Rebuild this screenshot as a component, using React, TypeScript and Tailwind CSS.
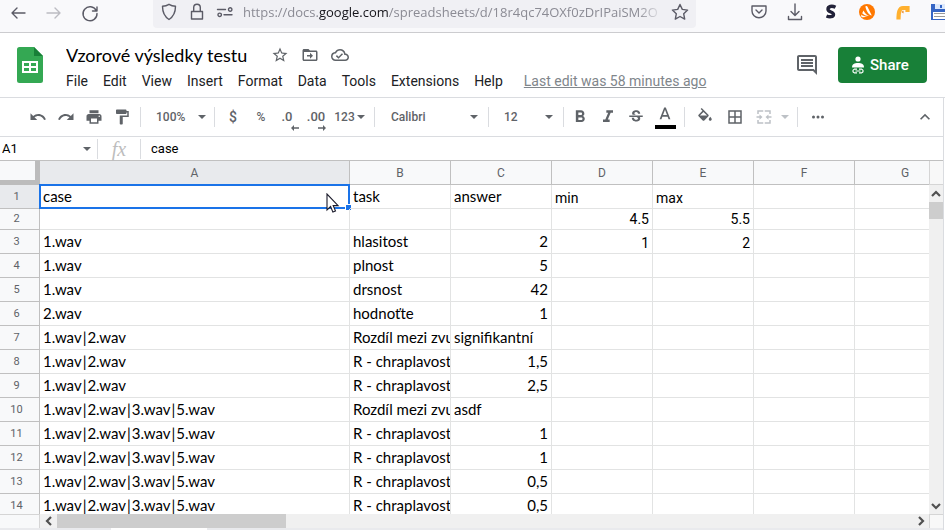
import React from "react";

type Cell = string | undefined;

const HEADERS = ["A", "B", "C", "D", "E", "F", "G"];

const ROWS: Cell[][] = [
  ["case", "task", "answer", "min", "max"],
  ["", "", "", "4.5", "5.5"],
  ["1.wav", "hlasitost", "2", "1", "2"],
  ["1.wav", "plnost", "5"],
  ["1.wav", "drsnost", "42"],
  ["2.wav", "hodnoťte", "1"],
  ["1.wav|2.wav", "Rozdíl mezi zvu", "signifikantní"],
  ["1.wav|2.wav", "R - chraplavost", "1,5"],
  ["1.wav|2.wav", "R - chraplavost", "2,5"],
  ["1.wav|2.wav|3.wav|5.wav", "Rozdíl mezi zvu", "asdf"],
  ["1.wav|2.wav|3.wav|5.wav", "R - chraplavost", "1"],
  ["1.wav|2.wav|3.wav|5.wav", "R - chraplavost", "1"],
  ["1.wav|2.wav|3.wav|5.wav", "R - chraplavost", "0,5"],
  ["1.wav|2.wav|3.wav|5.wav", "R - chraplavost", "0,5"],
];

const isNumber = (v: string) => /^[\d.,]+$/.test(v);

function Icon({ d, className = "size-[18px]", box = "0 0 24 24" }: { d: string; className?: string; box?: string }) {
  return (
    <svg viewBox={box} className={`shrink-0 ${className}`} fill="currentColor" aria-hidden="true">
      <path d={d} />
    </svg>
  );
}

function Line({ d, className = "size-5" }: { d: string; className?: string }) {
  return (
    <svg
      viewBox="0 0 20 20"
      className={`shrink-0 ${className}`}
      fill="none"
      stroke="currentColor"
      strokeWidth="1.4"
      strokeLinecap="round"
      strokeLinejoin="round"
      aria-hidden="true"
    >
      <path d={d} />
    </svg>
  );
}

function Caret() {
  return (
    <svg viewBox="0 0 8 4" className="h-1 w-2 shrink-0" fill="currentColor" aria-hidden="true">
      <path d="M0 0h8L4 4z" />
    </svg>
  );
}

function Tool({ label, className, children }: { label: string; className: string; children: React.ReactNode }) {
  return (
    <button type="button" aria-label={label} className={`flex h-6 shrink-0 items-center justify-center ${className}`}>
      {children}
    </button>
  );
}

function Picker({ label, className, options }: { label: string; className: string; options: string[] }) {
  return (
    <label className={`flex h-6 shrink-0 items-center ${className}`}>
      <select aria-label={label} className="h-6 min-w-0 flex-1 appearance-none bg-transparent outline-none">
        {options.map((o) => (
          <option key={o}>{o}</option>
        ))}
      </select>
      <Caret />
    </label>
  );
}

function Divider({ className = "" }: { className?: string }) {
  return <div className={`h-5 w-px shrink-0 bg-[#dadce0] ${className}`} />;
}

function BrowserBar() {
  return (
    <header className="flex h-[33px] shrink-0 items-start overflow-hidden border-b border-[#cccccf] bg-[#f9f9fb] text-[#5b5b66]">
      <div className="flex h-[26px] items-center">
        <button type="button" aria-label="Back" className="ml-2 flex w-5 justify-center">
          <Line d="M17 10H4M9 5l-5 5 5 5" />
        </button>
        <button type="button" aria-label="Forward" className="ml-4 flex w-5 justify-center text-[#bcbcc2]">
          <Line d="M3 10h13M11 5l5 5-5 5" />
        </button>
        <button type="button" aria-label="Reload" className="ml-4 flex w-5 justify-center">
          <Line d="M16.2 7.500A7 7 0 1 0 17 10.500M17 4v4h-4.500" />
        </button>
      </div>
      <div className="ml-[53px] flex h-7 w-[543px] items-center rounded-b bg-[#f0f0f4] pb-1">
        <Line className="ml-1.5 size-5" d="M10 2.300c2 1.200 4 1.800 6.500 2 0 6-1.500 10-6.500 13.200C5 14.300 3.500 10.300 3.500 4.300 6 4.100 8 3.500 10 2.300z" />
        <Line className="ml-2 size-5" d="M4.500 9.500h11v7.500h-11zM6.700 9V5.500a3.300 3.300 0 0 1 6.600 0V9" />
        <Line className="ml-2 size-5" d="M2.500 7.500h8M13.500 7.500a1.700 1.700 0 1 0 3.400 0a1.700 1.700 0 1 0-3.400 0M3 12.800a1.700 1.700 0 1 0 3.400 0a1.700 1.700 0 1 0-3.400 0M9 12.800h8" />
        <p className="ml-2 w-[420px] overflow-hidden font-['Open_Sans','Noto_Sans',sans-serif] text-[13px] leading-6 whitespace-nowrap text-[#8b8b94] [mask-image:linear-gradient(to_right,#000_94%,transparent)]">
          https://docs.<span className="text-[#15141a]">google.com</span>/spreadsheets/d/18r4qc74OXf0zDrIPaiSM2O
        </p>
        <button type="button" aria-label="Bookmark this page" className="ml-[7px] flex">
          <Line d="M10 2.500l2.300 4.900 5.300.7-3.900 3.700 1 5.300-4.700-2.600-4.700 2.600 1-5.300L2.400 8.100l5.300-.7z" />
        </button>
      </div>
      <div className="ml-auto flex h-6 shrink-0 items-center">
        <button type="button" aria-label="Save to Pocket" className="mr-4 flex">
          <Line d="M3 4h14v5a7 6.800 0 0 1-14 0zM7 8l3 3 3-3" />
        </button>
        <button type="button" aria-label="Downloads" className="mr-4 flex">
          <Line d="M10 2v11M6 9.500l4 4 4-4M3.500 14.500v3h13v-3" />
        </button>
        <button type="button" aria-label="Stylus" className="mr-4 flex">
          <svg viewBox="0 0 20 20" className="size-5" aria-hidden="true">
            <circle cx="10" cy="10" r="8" fill="#fff" />
            <path d="M14.500 5.300C10.500 3.300 7 4.500 7 7.300c0 3 5.500 2.500 5.500 5.200 0 2.500-4 2.800-7 1.500" fill="none" stroke="#23233a" strokeWidth="3.400" />
          </svg>
        </button>
        <button type="button" aria-label="Avast" className="mr-4 flex">
          <svg viewBox="0 0 20 20" className="size-5" aria-hidden="true">
            <circle cx="10" cy="10" r="8" fill="#ff7800" />
            <path d="M8.300 4.500c.8-1 2-.5 2.300.4l4.200 8.600c-2.700-.3-5-3.500-6.500-9zM6.500 8.500c1.200 2.500 3 4.500 5.500 5.500-3-.2-5.500-1-6.800-2.700zM4 12.500c2 1.500 4 2 6.500 2-2.500 1-5 1-6 .4z" fill="#fff" />
          </svg>
        </button>
        <button type="button" aria-label="Extension" className="mr-[18px] flex">
          <svg viewBox="0 0 20 20" className="size-5" aria-hidden="true">
            <path d="M5.500 17.500C5.500 10 6.500 6 10 6h4.500v4" fill="none" stroke="#ffb02e" strokeWidth="4.200" />
            <path d="M8.500 10l2-1.500v3z" fill="#e8821e" />
          </svg>
        </button>
        <button type="button" aria-label="Save page" className="flex">
          <svg viewBox="0 0 14 18" className="h-[18px] w-3.5" aria-hidden="true">
            <path d="M0 1h14v16H0z" fill="#3565c4" />
            <path d="M4 1h10v5H4z" fill="#dce8fb" />
            <path d="M9 2h2v3H9z" fill="#3565c4" />
            <path d="M2 9h12v7H2z" fill="#fff" />
            <path d="M3 10.500h11M3 13.500h11" stroke="#999" />
          </svg>
        </button>
      </div>
    </header>
  );
}

function DocHeader() {
  const menus = ["File", "Edit", "View", "Insert", "Format", "Data", "Tools", "Extensions", "Help"];
  return (
    <div className="flex h-[65px] shrink-0 items-start border-b border-[#dadce0]">
      <a href="#home" aria-label="Sheets home" className="mt-3.5 ml-[17px] flex">
        <svg viewBox="0 0 26 36" className="h-9 w-[26px]" aria-hidden="true">
          <path d="M2.500 0H17l9 9v24.500a2.500 2.500 0 0 1-2.500 2.500h-21A2.500 2.500 0 0 1 0 33.500v-31A2.500 2.500 0 0 1 2.500 0z" fill="#34a853" />
          <path d="M17 0l9 9h-9z" fill="#188038" />
          <path d="M5 14h16v12H5zM7 16v3h5v-3zM14 16v3h5v-3zM7 21v3h5v-3zM14 21v3h5v-3z" fill="#fff" fillRule="evenodd" />
        </svg>
      </a>
      <div className="ml-[23px]">
        <div className="mt-2 flex h-7 items-center text-[#5f6368]">
          <input
            aria-label="Document title"
            defaultValue="Vzorové výsledky testu"
            className="h-7 w-[190px] font-['Lato',sans-serif] text-[18px] leading-7 text-black outline-none"
          />
          <button type="button" aria-label="Star" className="ml-[15px] flex">
            <Icon d="M22 9.240l-7.190-.620L12 2 9.190 8.630 2 9.240l5.460 4.730L5.820 21 12 17.270 18.180 21l-1.630-7.030L22 9.240zM12 15.400l-3.760 2.270 1-4.280-3.320-2.880 4.380-.380L12 6.100l1.710 4.040 4.380.380-3.320 2.880 1 4.280L12 15.400z" />
          </button>
          <button type="button" aria-label="Move" className="ml-3 flex">
            <Icon d="M20 6h-8l-2-2H4c-1.100 0-2 .9-2 2v12c0 1.100.9 2 2 2h16c1.100 0 2-.9 2-2V8c0-1.100-.9-2-2-2zm0 12H4V8h16v10zm-8-1l4-4-4-4v3H8v2h4z" />
          </button>
          <button type="button" aria-label="Document status" className="ml-3 flex">
            <Icon d="M19.350 10.040A7.490 7.490 0 0 0 12 4C9.110 4 6.600 5.640 5.350 8.040A5.994 5.994 0 0 0 0 14c0 3.310 2.690 6 6 6h13c2.760 0 5-2.240 5-5 0-2.640-2.050-4.780-4.650-4.960zM19 18H6c-2.210 0-4-1.790-4-4 0-2.050 1.530-3.760 3.560-3.970l1.070-.11.5-.95A5.469 5.469 0 0 1 12 6c2.620 0 4.880 1.860 5.390 4.430l.3 1.500 1.530.11A2.980 2.980 0 0 1 22 15c0 1.650-1.350 3-3 3zm-9-3.820l-2.090-2.090L6.500 13.500 10 17l6.010-6.010-1.410-1.410z" />
          </button>
        </div>
        <nav className="flex h-6 items-center font-['Roboto',sans-serif] text-[14px] leading-6 text-[#202124]">
          {menus.map((m) => (
            <button key={m} type="button" className="mr-[15px] whitespace-nowrap">
              {m}
            </button>
          ))}
          <a href="#history" className="ml-1.5 whitespace-nowrap text-[#80868b] underline">
            Last edit was 58 minutes ago
          </a>
        </nav>
      </div>
      <button type="button" aria-label="Comments" className="mt-5 ml-auto flex text-[#5f6368]">
        <Icon className="size-6" d="M21.990 4c0-1.100-.89-2-1.990-2H4c-1.100 0-2 .9-2 2v12c0 1.100.9 2 2 2h14l4 4-.01-18zM20 4v13.170L18.830 16H4V4h16zM6 12h12v2H6zm0-3h12v2H6zm0-3h12v2H6z" />
      </button>
      <button
        type="button"
        className="mt-3.5 mr-[18px] ml-[19px] flex h-9 w-[89px] shrink-0 items-center rounded bg-[#188038] pl-3 font-['Roboto',sans-serif] text-[15px] font-medium text-white"
      >
        <svg viewBox="0 0 16 18" className="mr-1 h-[18px] w-4" fill="none" aria-hidden="true">
          <circle cx="8" cy="3" r="2.600" fill="#fff" />
          <path d="M2 11.500C2 8 4.500 7 8 7s6 1 6 4.500z" fill="#fff" />
          <path d="M7 13.200H4.200a1.900 1.900 0 0 0 0 3.600H7M9 13.200h2.800a1.900 1.900 0 0 1 0 3.600H9M5.500 15h5" stroke="#fff" strokeWidth="1.200" />
        </svg>
        Share
      </button>
    </div>
  );
}

function Toolbar() {
  return (
    <div className="flex h-[39px] shrink-0 items-center border-b border-[#dadce0] font-['Roboto',sans-serif] text-[12px] font-medium text-[#5f6368]">
      <Tool label="Undo" className="ml-7 w-5">
        <Icon d="M12.500 8c-2.650 0-5.050.99-6.900 2.600L2 7v9h9l-3.620-3.620c1.390-1.160 3.160-1.880 5.120-1.880 3.540 0 6.550 2.310 7.600 5.500l2.370-.78C21.080 11.030 17.150 8 12.500 8z" />
      </Tool>
      <Tool label="Redo" className="ml-2 w-5">
        <Icon d="M18.400 10.600C16.550 8.990 14.150 8 11.500 8c-4.650 0-8.580 3.030-9.960 7.220L3.900 16c1.050-3.190 4.050-5.500 7.600-5.500 1.950 0 3.730.72 5.120 1.880L13 16h9V7l-3.600 3.600z" />
      </Tool>
      <Tool label="Print" className="ml-2 w-5">
        <Icon d="M19 8H5c-1.660 0-3 1.340-3 3v6h4v4h12v-4h4v-6c0-1.660-1.340-3-3-3zm-3 11H8v-5h8v5zm3-7c-.55 0-1-.45-1-1s.45-1 1-1 1 .45 1 1-.45 1-1 1zm-1-9H6v4h12V3z" />
      </Tool>
      <Tool label="Paint format" className="ml-2 w-5">
        <Icon d="M18 4V3c0-.55-.45-1-1-1H5c-.55 0-1 .45-1 1v4c0 .55.45 1 1 1h12c.55 0 1-.45 1-1V6h1v4H9v11c0 .55.45 1 1 1h2c.55 0 1-.45 1-1v-9h8V4h-3z" />
      </Tool>
      <Divider className="ml-2" />
      <Picker label="Zoom" className="ml-[15px] w-[50px]" options={["100%", "75%", "50%"]} />
      <Divider className="ml-2" />
      <Tool label="Format as currency" className="ml-2 w-5 text-[14px]">$</Tool>
      <Tool label="Format as percent" className="ml-2 w-5">%</Tool>
      <Tool label="Decrease decimal places" className="relative ml-1.5 w-5 text-[13px]">
        .0
        <svg viewBox="0 0 8 6" className="absolute -right-0.5 -bottom-0.5 h-1.5 w-2" fill="currentColor" aria-hidden="true">
          <path d="M0 3l3-3v2.300h5v1.400H3V6z" />
        </svg>
      </Tool>
      <Tool label="Increase decimal places" className="relative ml-[9px] w-5 text-[13px]">
        .00
        <svg viewBox="0 0 8 6" className="absolute right-0 -bottom-0.5 h-1.5 w-2" fill="currentColor" aria-hidden="true">
          <path d="M8 3L5 0v2.300H0v1.400h5V6z" />
        </svg>
      </Tool>
      <Tool label="More formats" className="ml-2 w-[31px] gap-0.5 text-[12px]">
        123
        <Caret />
      </Tool>
      <Divider className="ml-[9px]" />
      <Picker label="Font" className="ml-4 w-[87px]" options={["Calibri", "Arial", "Roboto"]} />
      <Divider className="ml-2.5" />
      <Picker label="Font size" className="ml-[15px] w-[49px]" options={["12", "11", "10"]} />
      <Divider className="ml-2.5" />
      <Tool label="Bold" className="ml-1.5 w-5">
        <Icon className="size-5" d="M15.600 10.790c.97-.67 1.650-1.770 1.650-2.790 0-2.260-1.750-4-4-4H7v14h7.040c2.090 0 3.710-1.700 3.710-3.790 0-1.520-.86-2.820-2.150-3.420zM10 6.500h3c.83 0 1.500.67 1.500 1.500s-.67 1.500-1.500 1.500h-3v-3zm3.500 9H10v-3h3.500c.83 0 1.500.67 1.500 1.500s-.67 1.500-1.500 1.500z" />
      </Tool>
      <Tool label="Italic" className="ml-2 w-5">
        <Icon className="size-5" d="M10 4v3h2.210l-3.420 8H6v3h8v-3h-2.210l3.420-8H18V4z" />
      </Tool>
      <Tool label="Strikethrough" className="ml-2 w-5">
        <Icon d="M7.240 8.750c-.26-.48-.39-1.030-.39-1.670 0-.61.13-1.160.4-1.670.26-.5.630-.93 1.110-1.290.48-.35 1.050-.63 1.700-.83.660-.19 1.390-.29 2.180-.29.810 0 1.540.11 2.210.34.660.22 1.230.54 1.690.94.470.4.830.88 1.080 1.430s.38 1.150.38 1.810h-3.010c0-.31-.05-.59-.15-.85-.09-.27-.24-.49-.44-.68-.2-.19-.45-.33-.75-.44-.3-.1-.66-.16-1.060-.16-.39 0-.74.04-1.030.13s-.53.21-.72.36c-.19.16-.34.340-.44.550-.1.210-.15.430-.15.660 0 .48.250.88.740 1.210.38.250.77.480 1.410.7H7.390c-.05-.08-.11-.17-.15-.25zM21 12v-2H3v2h9.620c.18.070.40.140.55.200.370.170.66.340.87.510s.35.360.43.570c.07.200.11.430.11.690 0 .23-.05.450-.14.660-.09.200-.23.380-.42.530-.19.150-.42.260-.71.350-.29.080-.63.130-1.010.13-.43 0-.83-.04-1.180-.13s-.66-.23-.91-.42c-.25-.19-.45-.44-.59-.75s-.25-.76-.25-1.210H6.400c0 .55.080 1.130.24 1.580s.37.850.65 1.210c.28.350.6.660.98.920.37.260.78.480 1.220.65.440.170.9.300 1.380.39.480.08.96.13 1.440.13.800 0 1.530-.09 2.180-.28s1.210-.45 1.670-.79c.46-.34.82-.77 1.070-1.270s.38-1.070.38-1.710c0-.6-.1-1.140-.31-1.610-.05-.11-.11-.23-.17-.33H21z" />
      </Tool>
      <Tool label="Text colour" className="ml-2 w-[22px] flex-col">
        <Icon className="size-5" d="M11 3L5.500 17h2.250l1.120-3h6.250l1.120 3h2.250L13 3h-2zm-1.380 9L12 5.670 14.380 12H9.620z" />
        <span className="h-1 w-[21px] shrink-0 bg-black" />
      </Tool>
      <Divider className="ml-2" />
      <Tool label="Fill colour" className="ml-2.5 w-5">
        <Icon d="M16.560 8.940L7.620 0 6.210 1.410l2.380 2.380-5.150 5.150a1.490 1.490 0 0 0 0 2.120l5.500 5.500c.29.290.68.440 1.060.44s.77-.15 1.060-.44l5.500-5.500c.59-.58.59-1.530 0-2.120zM5.210 10L10 5.210 14.790 10zM19 11.500s-2 2.170-2 3.500c0 1.100.9 2 2 2s2-.9 2-2c0-1.330-2-3.500-2-3.500z" />
      </Tool>
      <Tool label="Borders" className="ml-2.5 w-5">
        <Icon d="M3 3v18h18V3H3zm8 16H5v-6h6v6zm0-8H5V5h6v6zm8 8h-6v-6h6v6zm0-8h-6V5h6v6z" />
      </Tool>
      <Tool label="Merge cells" className="ml-2.5 w-[34px] gap-2 text-[#bdc1c6]">
        <Icon d="M3 3h8v2H5v3H3zM13 3h8v5h-2V5h-6zM3 16h2v3h6v2H3zM19 16h2v5h-8v-2h6zM2 11h4V8.500L10 12l-4 3.500V13H2zM22 11h-4V8.500L14 12l4 3.500V13h4z" />
        <Caret />
      </Tool>
      <Divider className="ml-2" />
      <Tool label="More" className="ml-2.5 w-5">
        <Icon d="M6 10a2 2 0 1 0 0 4 2 2 0 0 0 0-4zm12 0a2 2 0 1 0 0 4 2 2 0 0 0 0-4zm-6 0a2 2 0 1 0 0 4 2 2 0 0 0 0-4z" />
      </Tool>
      <Tool label="Hide the menus" className="mr-2 ml-auto w-5">
        <Icon className="size-5" d="M12 8l-6 6 1.410 1.410L12 10.830l4.590 4.580L18 14z" />
      </Tool>
    </div>
  );
}

function FormulaBar() {
  return (
    <div className="flex h-6 shrink-0 items-center border-b border-[#c0c0c0] font-['Roboto',sans-serif] text-[#5f6368]">
      <input aria-label="Name box" defaultValue="A1" className="h-5 w-20 shrink-0 pl-0.5 text-[13px] text-black outline-none" />
      <button type="button" aria-label="Named ranges" className="flex w-3.5 justify-center">
        <Caret />
      </button>
      <Divider className="ml-[3px]" />
      <label htmlFor="formula" className="w-[42px] text-center font-['Liberation_Serif',serif] text-[20px] leading-5 text-[#bdbdbd] italic">
        fx
      </label>
      <Divider />
      <input id="formula" defaultValue="case" className="h-5 min-w-0 flex-1 pl-2.5 text-[13px] text-black outline-none" />
    </div>
  );
}

function CellText({ value }: { value: string }) {
  return value.split("|").map((part, i) => (
    <React.Fragment key={i}>
      {i > 0 && <span className="px-px">|</span>}
      {part}
    </React.Fragment>
  ));
}

function Sheet() {
  return (
    <div className="min-w-0 flex-1 overflow-hidden">
      <table className="w-[956px] table-fixed border-separate border-spacing-0">
        <colgroup>
          <col className="w-10" />
          <col className="w-[310px]" />
          {HEADERS.slice(1).map((h) => (
            <col key={h} className="w-[101px]" />
          ))}
        </colgroup>
        <thead>
          <tr className="h-6 font-['Roboto',sans-serif] text-[12px] leading-[22px] text-[#5f6368]">
            <th aria-label="Select all" className="border-r-[5px] border-b-[5px] border-[#bcbcbc] bg-[#f8f9fa] p-0" />
            {HEADERS.map((h, i) => (
              <th key={h} className={`border-r border-b border-[#c0c0c0] p-0 font-normal ${i === 0 ? "bg-[#e8eaed]" : "bg-[#f8f9fa]"}`}>
                {h}
              </th>
            ))}
          </tr>
        </thead>
        <tbody>
          {ROWS.map((row, r) => (
            <tr key={r} className={r === 1 ? "h-[21px]" : "h-6"}>
              <th
                className={`border-r border-b border-[#c0c0c0] p-0 pr-1.5 font-['Roboto',sans-serif] text-[11px] leading-4 font-normal text-[#5f6368] ${
                  r === 0 ? "bg-[#e8eaed]" : "bg-[#f8f9fa]"
                }`}
              >
                {r + 1}
              </th>
              {HEADERS.map((h, c) => {
                const v = row[c] ?? "";
                const selected = r === 0 && c === 0;
                return (
                  <td
                    key={h}
                    className={`relative border-r border-b border-[#e2e3e3] p-0 text-black ${
                      isNumber(v) ? "pr-[3px] text-right" : "pl-[3px] text-left"
                    } ${
                      c > 2
                        ? "align-bottom font-['Roboto',sans-serif] text-[14px] leading-5"
                        : "font-['Lato',sans-serif] text-[15px] leading-[18px]"
                    }`}
                  >
                    <div className="h-5 overflow-hidden whitespace-nowrap">
                      <CellText value={v} />
                    </div>
                    {selected && (
                      <div className="absolute -inset-px border-2 border-[#1a73e8]">
                        <span className="absolute -right-1 -bottom-1 size-[7px] border border-white bg-[#1a73e8]" />
                      </div>
                    )}
                  </td>
                );
              })}
            </tr>
          ))}
        </tbody>
      </table>
    </div>
  );
}

function Chevron({ d }: { d: string }) {
  return (
    <svg viewBox="0 0 10 10" className="size-2.5 shrink-0" fill="none" stroke="#505050" strokeWidth="2.200" aria-hidden="true">
      <path d={d} />
    </svg>
  );
}

export default function App() {
  return (
    <div className="relative flex h-screen flex-col overflow-hidden bg-white">
      <BrowserBar />
      <DocHeader />
      <div className="mr-px flex min-h-0 flex-1 flex-col border-r border-[#dadce0]">
        <Toolbar />
        <FormulaBar />
        <div className="flex min-h-0 flex-1">
          <Sheet />
          <div className="flex w-3.5 shrink-0 flex-col items-center bg-[#f0f0f0]">
            <div className="h-6 w-full shrink-0 border-b border-l border-[#d5d5d5] bg-[#f8f8f8]" />
            <div className="flex h-[17px] shrink-0 items-center">
              <Chevron d="M1 7l4-4 4 4" />
            </div>
            <div className="h-[17px] w-full shrink-0 bg-[#cdcdcd]" />
            <div className="mt-auto flex h-4 items-center">
              <Chevron d="M1 3l4 4 4-4" />
            </div>
          </div>
        </div>
        <div className="flex h-3.5 shrink-0 bg-[#f0f0f0]">
          <div className="w-10 shrink-0 border-t border-r border-[#d5d5d5] bg-[#f8f9fa]" />
          <div className="flex w-[17px] items-center justify-center">
            <Chevron d="M7 1L3 5l4 4" />
          </div>
          <div className="w-[229px] bg-[#cdcdcd]" />
          <div className="ml-auto flex w-[17px] items-center justify-center">
            <Chevron d="M3 1l4 4-4 4" />
          </div>
          <div className="w-3.5 border-t border-l border-[#d5d5d5] bg-[#f8f8f8]" />
        </div>
        <div className="flex h-0.5 shrink-0 bg-[#e9eaed]">
          <div className="ml-[111px] w-24 bg-white" />
        </div>
      </div>
      <svg viewBox="0 0 14 22" className="absolute top-[193px] left-[326px] h-[22px] w-3.5" aria-hidden="true">
        <path d="M1 1v16l3.600-3.500 2.300 5.600 2.600-1.100-2.300-5.400h4.900z" fill="#fff" stroke="#1b1b2b" strokeWidth="1.100" />
      </svg>
    </div>
  );
}
